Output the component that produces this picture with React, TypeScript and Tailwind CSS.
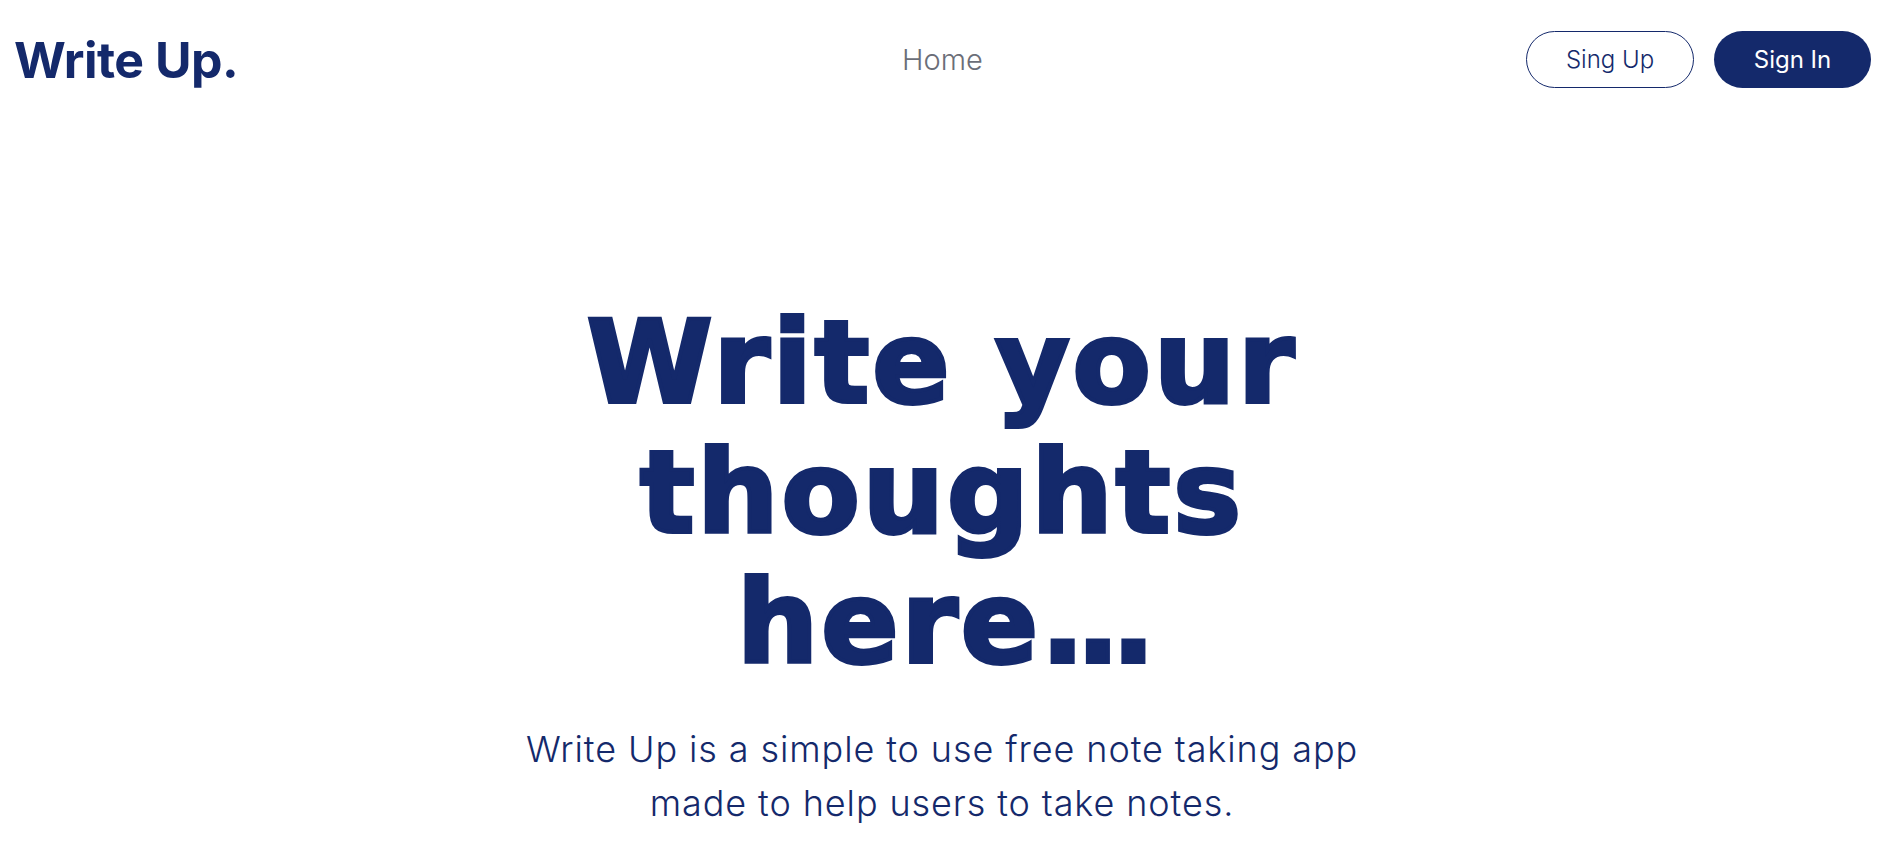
const navy = 'text-[#14296b]'

function Header() {
  return (
    <header className="grid grid-cols-3 items-center py-[31px] pl-[14px] pr-[13px]">
      <a
        href="#"
        className={`font-['Inter',sans-serif] text-[50px] leading-none font-bold tracking-[-0.01em] ${navy}`}
      >
        Write Up.
      </a>
      <nav className="flex justify-center">
        <a href="#" className="font-['Inter',sans-serif] text-[29px] leading-none font-light text-[#6b6e78]">
          Home
        </a>
      </nav>
      <div className="flex items-center justify-end gap-5">
        <a
          href="#"
          className={`flex h-[57px] w-[168px] items-center justify-center rounded-full border border-[#14296b] font-['Inter',sans-serif] text-[24px] font-light ${navy}`}
        >
          Sing Up
        </a>
        <a
          href="#"
          className="flex h-[57px] w-[157px] items-center justify-center rounded-full bg-[#14296b] font-['Inter',sans-serif] text-[24px] font-normal text-white"
        >
          Sign In
        </a>
      </div>
    </header>
  )
}

function Hero() {
  return (
    <section className="flex flex-col items-center pt-[179px] text-center">
      <h1
        className={`font-['DejaVu_Sans',sans-serif] text-[114px] leading-[130px] font-bold tracking-[3px] [-webkit-text-stroke:4px_#14296b] ${navy}`}
      >
        Write your
        <br />
        thoughts
        <br />
        here<span className="tracking-[-8px]">...</span>
      </h1>
      <p
        className={`mt-[34px] font-['Inter',sans-serif] text-[36px] leading-[54px] font-light tracking-[0.9px] ${navy}`}
      >
        Write Up is a simple to use free note taking app
        <br />
        made to help users to take notes.
      </p>
    </section>
  )
}

export default function App() {
  return (
    <div className="min-h-screen bg-white">
      <Header />
      <Hero />
    </div>
  )
}
